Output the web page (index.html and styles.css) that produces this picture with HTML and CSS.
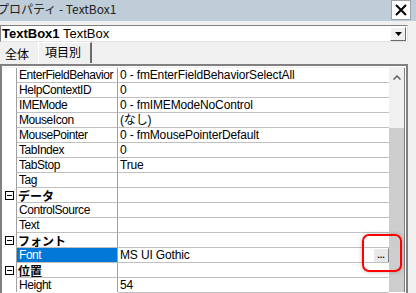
FILE: index.html
```html
<!DOCTYPE html>
<html lang="ja">
<head>
  <meta charset="UTF-8" />
  <title>プロパティ - TextBox1</title>
  <link rel="stylesheet" href="styles.css">
</head>
<body>
  <div class="window">
    <div class="titlebar">
      <span class="title">プロパティ - TextBox1</span>
      <span class="close">
        <svg width="14" height="14" viewBox="0 0 14 14"><path d="M2 2 L12 12 M12 2 L2 12" stroke="#000" stroke-width="2"/></svg>
      </span>
    </div>

    <!-- object selector -->
    <div class="objbox">
      <span class="objname"><b>TextBox1</b> TextBox</span>
      <span class="dropbtn">
        <svg width="7" height="4" viewBox="0 0 7 4"><path d="M0 0 H7 L3.5 4 Z" fill="#000"/></svg>
      </span>
    </div>

    <div class="tabs">
      <span class="tab">全体</span>
      <span class="tab active">項目別</span>
    </div>

    <!-- property grid -->
    <div class="frame">
      <div class="grid">
        <div class="g"></div><div class="n">EnterFieldBehavior</div><div class="v">0 - fmEnterFieldBehaviorSelectAll</div>
        <div class="g"></div><div class="n">HelpContextID</div><div class="v">0</div>
        <div class="g"></div><div class="n">IMEMode</div><div class="v">0 - fmIMEModeNoControl</div>
        <div class="g"></div><div class="n">MouseIcon</div><div class="v">(なし)</div>
        <div class="g"></div><div class="n">MousePointer</div><div class="v">0 - fmMousePointerDefault</div>
        <div class="g"></div><div class="n">TabIndex</div><div class="v">0</div>
        <div class="g"></div><div class="n">TabStop</div><div class="v">True</div>
        <div class="g"></div><div class="n">Tag</div><div class="v"></div>
        <div class="g"><span class="minus"></span></div><div class="n cat">データ</div><div class="v"></div>
        <div class="g"></div><div class="n">ControlSource</div><div class="v"></div>
        <div class="g"></div><div class="n">Text</div><div class="v"></div>
        <div class="g"><span class="minus"></span></div><div class="n cat">フォント</div><div class="v"></div>
        <div class="g"></div><div class="n sel">Font</div><div class="v">MS UI Gothic<span class="dots">...</span></div>
        <div class="g"><span class="minus"></span></div><div class="n cat">位置</div><div class="v"></div>
        <div class="g"></div><div class="n">Height</div><div class="v">54</div>
      </div>
      <div class="scroll">
        <div class="track">
          <svg width="8" height="5" viewBox="0 0 8 5"><path d="M0.5 4.5 L4 1 L7.5 4.5" stroke="#606060" stroke-width="1.5" fill="none"/></svg>
        </div>
        <div class="thumb"></div>
      </div>
    </div>
  </div>
  <span class="mark"></span>
</body>
</html>
```

FILE: styles.css
```css
body {
  margin: 0;
  background: #f0f0f0;
  font-family: 'Liberation Sans', 'Noto Sans CJK JP', sans-serif;
  font-size: 12px;
  color: #000;
  width: 416px;
  height: 293px;
  overflow: hidden;
  position: relative;
}

.window {
  width: 416px;
}

.titlebar {
  height: 21px;
  background: #bfcdd9;
  display: flex;
  align-items: flex-start;
  justify-content: space-between;
}

.title {
  margin-left: -3px;
  margin-top: 2px;
  font-family: 'Noto Sans CJK JP', sans-serif;
  font-size: 12px;
  line-height: 14px;
  color: #222;
}

.close {
  width: 18px;
  height: 18px;
  margin-right: 5px;
  background: #fff;
  border: 1px solid #9aa3ab;
  display: flex;
  align-items: center;
  justify-content: center;
}

.objbox {
  margin-top: 4px;
  width: 406px;
  height: 15px;
  background: #fff;
  border-top: 1px solid #808080;
  border-left: 1px solid #808080;
  border-bottom: 1px solid #e3e3e3;
  border-right: 1px solid #e3e3e3;
  display: flex;
  align-items: center;
  justify-content: space-between;
}

.objname {
  font-size: 13px;
  padding-left: 1px;
}

.dropbtn {
  width: 14px;
  height: 12px;
  margin-right: 1px;
  background: #f0f0f0;
  border-top: 1px solid #fff;
  border-left: 1px solid #fff;
  border-right: 1px solid #696969;
  border-bottom: 1px solid #696969;
  display: flex;
  align-items: center;
  justify-content: center;
}

.tabs {
  height: 22px;
  display: flex;
  align-items: flex-end;
  gap: 2px;
}

.tab {
  font-family: 'Noto Sans CJK JP', sans-serif;
  font-size: 12px;
  line-height: 16px;
  padding: 0 5px 2px;
  width: 26px;
}

.tab.active {
  width: 39px;
  padding: 1px 6px 3px;
  margin-bottom: 1px;
  border-top: 1px solid #fff;
  border-left: 1px solid #fff;
  border-right: 2px solid #6b6b6b;
}

.frame {
  width: 402px;
  height: 227px;
  display: flex;
  border-top: 2px solid #808080;
  border-left: 2px solid #808080;
  border-right: 2px solid #808080;
  outline: 1px solid #fff;
  outline-offset: -3px;
  padding: 2px 1px 0;
}

.grid {
  flex: 1;
  display: grid;
  grid-template-columns: 14px 101px 1fr;
  grid-auto-rows: 15px;
  background: #fff;
}

.g {
  border-right: 1px solid #a0a0a0;
  display: flex;
  align-items: center;
  justify-content: center;
}

.n,
.v {
  border-bottom: 1px solid #c0c0c0;
  padding-left: 2px;
  line-height: 14px;
  white-space: nowrap;
  overflow: hidden;
}

.n {
  border-right: 1px solid #a0a0a0;
  letter-spacing: -0.45px;
}

.v {
  position: relative;
  letter-spacing: -0.15px;
}

.n.cat {
  font-family: 'Noto Sans CJK JP', sans-serif;
  font-weight: bold;
  font-size: 12px;
  line-height: 15px;
  letter-spacing: 0;
  overflow: visible;
  margin-left: -1px;
}

.n.sel {
  background: #0078d7;
  color: #fff;
}

.minus {
  width: 9px;
  height: 9px;
  border: 1px solid #000;
  box-sizing: border-box;
  background: linear-gradient(#000, #000) center / 5px 1px no-repeat;
}

.dots {
  position: absolute;
  right: 0;
  top: 0;
  width: 14px;
  height: 13px;
  background: #e8e8e8;
  border-top: 1px solid #fff;
  border-left: 1px solid #fff;
  border-right: 1px solid #808080;
  border-bottom: 1px solid #808080;
  font-weight: bold;
  font-size: 9px;
  line-height: 12px;
  text-align: center;
  letter-spacing: 0;
}

.scroll {
  width: 15px;
  display: flex;
  flex-direction: column;
  border-right: 1px solid #808080;
}

.track {
  height: 60px;
  background: #f0f0f0;
  display: flex;
  justify-content: center;
  padding-top: 7px;
  box-sizing: border-box;
}

.thumb {
  flex: 1;
  background: #cdcdcd;
}

.mark {
  position: absolute;
  left: 362px;
  top: 234px;
  width: 36px;
  height: 34px;
  border: 2px solid #ff0000;
  border-radius: 7px;
  box-shadow: 0 0 4px rgba(0, 0, 0, 0.25);
}
```
